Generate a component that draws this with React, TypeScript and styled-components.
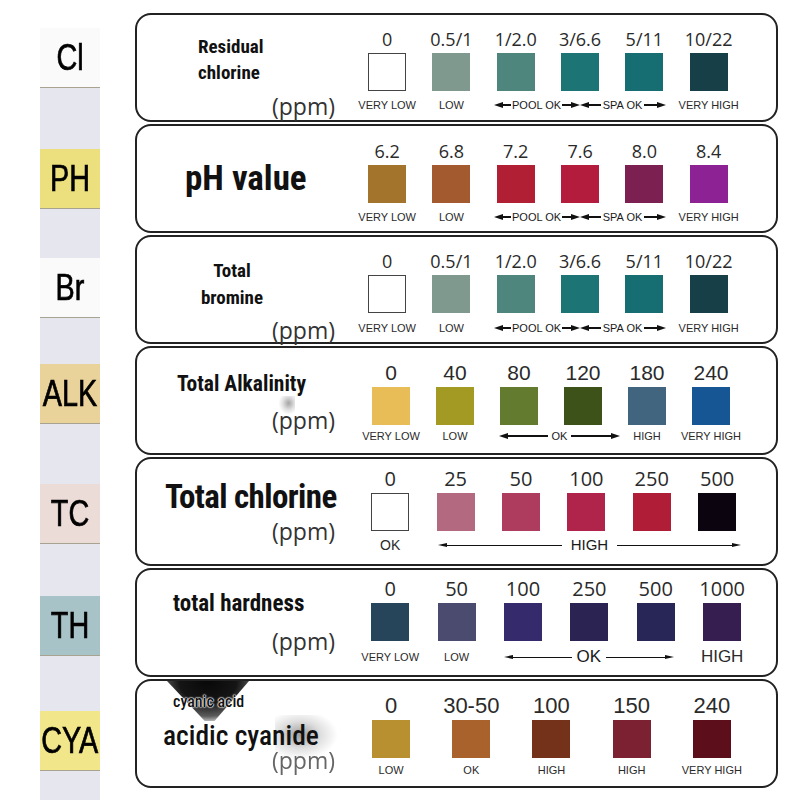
import React from "react";
import styled, { createGlobalStyle } from "styled-components";

const Global = createGlobalStyle`
  html, body { margin: 0; padding: 0; background: #fff; }
  body { width: 800px; height: 800px; overflow: hidden; font-family: "Liberation Sans", Arial, sans-serif; }
`;

const Page = styled.div`
  display: flex;
  align-items: flex-start;
  width: 800px;
  height: 800px;
`;

const Strip = styled.div`
  margin-left: 40px;
  margin-top: 28px;
  width: 60px;
  height: 772px;
  background: #e6e6ee;
  display: flex;
  flex-direction: column;
`;

const Pad = styled.div<{ $bg: string; $mt: number }>`
  margin-top: ${(p) => p.$mt}px;
  height: 59px;
  background: ${(p) => p.$bg};
  border-bottom: 1.5px solid #a8a290;
  display: flex;
  align-items: center;
  justify-content: center;
  overflow: hidden;
`;

const PadText = styled.span`
  display: inline-block;
  font-family: "Liberation Sans", Arial, sans-serif;
  font-size: 36px;
  line-height: 40px;
  color: #000;
  -webkit-text-stroke: 0.7px #000;
  transform: scaleX(0.8);
  white-space: nowrap;
`;

const Panels = styled.div`
  margin-left: 35px;
  margin-top: 13px;
  width: 643px;
  display: flex;
  flex-direction: column;
  gap: 2px;
`;

const Panel = styled.div`
  position: relative;
  height: 105px;
  border: 2px solid #222;
  border-radius: 16px;
  display: flex;
  background: #fff;
`;

const TitleArea = styled.div<{ $pt: number }>`
  width: 218px;
  flex: none;
  box-sizing: border-box;
  padding-top: ${(p) => p.$pt}px;
  padding-right: 20px;
  display: flex;
  flex-direction: column;
  position: relative;
`;

const Title = styled.div<{ $size: number; $lh: number; $ml: number; $w?: number; $mt?: number; $weight?: number; $ls?: number }>`
  margin-left: ${(p) => p.$ml}px;
  margin-top: ${(p) => p.$mt ?? 0}px;
  ${(p) => (p.$w ? `width: ${p.$w}px; text-align: center;` : "")}
  font-family: "Roboto Condensed", "Liberation Sans Narrow", Roboto, sans-serif;
  font-weight: ${(p) => p.$weight ?? 700};
  font-size: ${(p) => p.$size}px;
  line-height: ${(p) => p.$lh}px;
  letter-spacing: ${(p) => p.$ls ?? 0}px;
  color: #111;
  white-space: nowrap;
  position: relative;
  z-index: 1;
`;

const Ppm = styled.div<{ $mt: number; $faded?: boolean }>`
  align-self: flex-end;
  margin-top: ${(p) => p.$mt}px;
  font-family: "Open Sans", sans-serif;
  font-size: 23px;
  line-height: 26px;
  color: ${(p) => (p.$faded ? "#666" : "#333")};
  ${(p) => (p.$faded ? "filter: blur(0.6px);" : "")}
`;

const Grid = styled.div<{ $n: number; $w: number; $ml: number; $pt: number; $lmt: number }>`
  margin-left: ${(p) => p.$ml}px;
  padding-top: ${(p) => p.$pt}px;
  display: grid;
  grid-template-columns: repeat(${(p) => p.$n}, ${(p) => p.$w}px);
  grid-template-rows: 27px 38px ${(p) => 16 + p.$lmt}px;
  align-content: start;
`;

const Num = styled.div<{ $font: "open" | "arial"; $size: number }>`
  justify-self: center;
  align-self: start;
  font-family: ${(p) => (p.$font === "open" ? '"Open Sans", sans-serif' : '"Liberation Sans", Arial, sans-serif')};
  font-size: ${(p) => p.$size}px;
  line-height: 26px;
  color: #2a2a2a;
  white-space: nowrap;
`;

const Swatch = styled.div<{ $c: string }>`
  justify-self: center;
  width: 38px;
  height: 38px;
  box-sizing: border-box;
  background: ${(p) => (p.$c === "white" ? "#fff" : p.$c)};
  border: ${(p) => (p.$c === "white" ? "1.5px solid #444" : "none")};
`;

const LabelCell = styled.div<{ $span: number; $lmt: number; $ml?: number; $mr?: number }>`
  grid-column: span ${(p) => p.$span};
  padding-top: ${(p) => p.$lmt}px;
  margin-left: ${(p) => p.$ml ?? 0}px;
  margin-right: ${(p) => p.$mr ?? 0}px;
  display: flex;
  justify-content: center;
  align-items: center;
  height: 16px;
`;

const LabelText = styled.span<{ $size: number }>`
  font-family: "Liberation Sans", Arial, sans-serif;
  font-size: ${(p) => p.$size}px;
  color: #2a2a2a;
  white-space: nowrap;
  line-height: 16px;
`;

const Head = styled.span<{ $dir: "l" | "r"; $w: number; $h: number }>`
  flex: none;
  width: 0;
  height: 0;
  border-top: ${(p) => p.$h}px solid transparent;
  border-bottom: ${(p) => p.$h}px solid transparent;
  ${(p) => (p.$dir === "l" ? `border-right: ${p.$w}px solid #111;` : `border-left: ${p.$w}px solid #111;`)}
`;

const Line = styled.span<{ $t: number }>`
  flex: 1;
  height: ${(p) => p.$t}px;
  background: #111;
`;

const ArrowText = styled.span<{ $size: number; $gap: number }>`
  flex: none;
  padding: 0 ${(p) => p.$gap}px;
  font-family: "Liberation Sans", Arial, sans-serif;
  font-size: ${(p) => p.$size}px;
  line-height: 16px;
  color: #1a1a1a;
  white-space: nowrap;
`;

const ArrowBox = styled.span`
  flex: 1;
  display: flex;
  align-items: center;
`;

const Smudge = styled.span<{ $l: number; $t: number; $w: number; $h: number; $bg: string; $clip?: string }>`
  position: absolute;
  left: ${(p) => p.$l}px;
  top: ${(p) => p.$t}px;
  width: ${(p) => p.$w}px;
  height: ${(p) => p.$h}px;
  background: ${(p) => p.$bg};
  ${(p) => (p.$clip ? `clip-path: ${p.$clip};` : "")}
  pointer-events: none;
  z-index: 0;
`;

const Arrow: React.FC<{ text: string; size: number; gap: number; hw: number; hh: number; t: number }> = ({ text, size, gap, hw, hh, t }) => (
  <ArrowBox>
    <Head $dir="l" $w={hw} $h={hh} />
    <Line $t={t} />
    <ArrowText $size={size} $gap={gap}>{text}</ArrowText>
    <Line $t={t} />
    <Head $dir="r" $w={hw} $h={hh} />
  </ArrowBox>
);

type Lab =
  | { kind: "text"; text: string; size?: number; span?: number }
  | { kind: "arrow"; text: string; span: number; size: number; gap: number; ml: number; mr: number; hw: number; hh: number; t: number }
  | { kind: "poolspa"; span: number; ml: number; mr: number };

type PanelDef = {
  key: string;
  titlePt: number;
  title: React.ReactNode;
  ppm: React.ReactNode;
  smudges?: React.ReactNode;
  gridMl: number;
  colW: number;
  pt: number;
  lmt: number;
  numFont: "open" | "arial";
  numSize: number;
  values: string[];
  colors: string[];
  labels: Lab[];
};

const poolSpaLabels: Lab[] = [
  { kind: "text", text: "VERY LOW" },
  { kind: "text", text: "LOW" },
  { kind: "poolspa", span: 3, ml: 10, mr: 11 },
  { kind: "text", text: "VERY HIGH" },
];

const panels: PanelDef[] = [
  {
    key: "cl",
    titlePt: 19,
    title: (
      <Title $size={19} $lh={26} $ml={61}>
        Residual
        <br />
        chlorine
      </Title>
    ),
    ppm: <Ppm $mt={7}>(ppm)</Ppm>,
    gridMl: 0,
    colW: 64.3,
    pt: 11,
    lmt: 6,
    numFont: "open",
    numSize: 18,
    values: ["0", "0.5/1", "1/2.0", "3/6.6", "5/11", "10/22"],
    colors: ["white", "#80998f", "#4e857c", "#1d7474", "#176e72", "#163f47"],
    labels: poolSpaLabels,
  },
  {
    key: "ph",
    titlePt: 33,
    title: (
      <Title $size={35} $lh={40} $ml={48}>
        pH value
      </Title>
    ),
    ppm: null,
    gridMl: 0,
    colW: 64.3,
    pt: 12,
    lmt: 6,
    numFont: "open",
    numSize: 18,
    values: ["6.2", "6.8", "7.2", "7.6", "8.0", "8.4"],
    colors: ["#a3742c", "#a35a2e", "#b01f33", "#b41c3e", "#7c2052", "#8c2294"],
    labels: poolSpaLabels,
  },
  {
    key: "br",
    titlePt: 20,
    title: (
      <Title $size={19} $lh={27} $ml={55} $w={80}>
        Total
        <br />
        bromine
      </Title>
    ),
    ppm: <Ppm $mt={6}>(ppm)</Ppm>,
    gridMl: 0,
    colW: 64.3,
    pt: 11,
    lmt: 7,
    numFont: "open",
    numSize: 18,
    values: ["0", "0.5/1", "1/2.0", "3/6.6", "5/11", "10/22"],
    colors: ["white", "#80998f", "#4e857c", "#1d7474", "#176e72", "#163f47"],
    labels: poolSpaLabels,
  },
  {
    key: "alk",
    titlePt: 23,
    title: (
      <Title $size={21.5} $lh={26} $ml={40}>
        Total Alkalinity
      </Title>
    ),
    ppm: <Ppm $mt={10}>(ppm)</Ppm>,
    smudges: (
      <Smudge
        $l={142}
        $t={48}
        $w={16}
        $h={18}
        $bg="radial-gradient(ellipse at 60% 40%, rgba(90,90,90,0.55) 0%, rgba(140,140,140,0.25) 45%, rgba(255,255,255,0) 75%)"
      />
    ),
    gridMl: 4,
    colW: 64,
    pt: 12,
    lmt: 3,
    numFont: "arial",
    numSize: 21,
    values: ["0", "40", "80", "120", "180", "240"],
    colors: ["#e8bd57", "#a29a22", "#637b2f", "#3c5218", "#41647f", "#175694"],
    labels: [
      { kind: "text", text: "VERY LOW" },
      { kind: "text", text: "LOW" },
      { kind: "arrow", text: "OK", span: 2, size: 11, gap: 4, ml: 12, mr: -5, hw: 9, hh: 3, t: 1.5 },
      { kind: "text", text: "HIGH" },
      { kind: "text", text: "VERY HIGH" },
    ],
  },
  {
    key: "tc",
    titlePt: 19,
    title: (
      <Title $size={33} $lh={38} $ml={28} $ls={-0.6}>
        Total chlorine
      </Title>
    ),
    ppm: <Ppm $mt={2}>(ppm)</Ppm>,
    gridMl: 2.5,
    colW: 65.4,
    pt: 7,
    lmt: 6,
    numFont: "open",
    numSize: 20,
    values: ["0", "25", "50", "100", "250", "500"],
    colors: ["white", "#b36a80", "#ad3c5e", "#b0234b", "#b01d36", "#0c0510"],
    labels: [
      { kind: "text", text: "OK", size: 14 },
      { kind: "arrow", text: "HIGH", span: 5, size: 15, gap: 9, ml: 15, mr: 9, hw: 9, hh: 2.5, t: 1 },
    ],
  },
  {
    key: "th",
    titlePt: 20,
    title: (
      <Title $size={23} $lh={28} $ml={36}>
        total hardness
      </Title>
    ),
    ppm: <Ppm $mt={10}>(ppm)</Ppm>,
    gridMl: 2,
    colW: 66.4,
    pt: 6,
    lmt: 8,
    numFont: "open",
    numSize: 20,
    values: ["0", "50", "100", "250", "500", "1000"],
    colors: ["#26455a", "#4a4b6e", "#352a6c", "#2b2453", "#272656", "#361f50"],
    labels: [
      { kind: "text", text: "VERY LOW" },
      { kind: "text", text: "LOW" },
      { kind: "arrow", text: "OK", span: 3, size: 17, gap: 5, ml: 14, mr: 15, hw: 9, hh: 2.5, t: 1 },
      { kind: "text", text: "HIGH", size: 17 },
    ],
  },
  {
    key: "cya",
    titlePt: 12,
    title: (
      <>
        <Title
          $size={16}
          $lh={18}
          $ml={36}
          $weight={500}
          style={{ textShadow: "0 0 2px #fff, 0 0 2px #fff, 0 0 1px #fff, 0 0 1px #fff" }}
        >
          cyanic acid
        </Title>
        <Title $size={27.5} $lh={30} $ml={26} $mt={10} $weight={500}>
          acidic cyanide
        </Title>
      </>
    ),
    ppm: <Ppm $mt={-4} $faded>(ppm)</Ppm>,
    smudges: (
      <>
        <Smudge
          $l={30}
          $t={0}
          $w={82}
          $h={40}
          $bg="radial-gradient(ellipse 70% 110% at 50% 0%, #080808 0%, #151515 50%, rgba(50,50,50,0.8) 80%, rgba(255,255,255,0) 100%)"
          $clip="polygon(0 0, 100% 0, 58% 100%, 46% 100%)"
        />
        <Smudge
          $l={138}
          $t={34}
          $w={62}
          $h={44}
          $bg="radial-gradient(ellipse at 40% 45%, rgba(80,80,80,0.55) 0%, rgba(150,150,150,0.3) 40%, rgba(255,255,255,0) 72%)"
        />
      </>
    ),
    gridMl: -4,
    colW: 80.2,
    pt: 12,
    lmt: 4,
    numFont: "arial",
    numSize: 22,
    values: ["0", "30-50", "100", "150", "240"],
    colors: ["#b8902f", "#a9622b", "#74321a", "#7b2131", "#5c0e1b"],
    labels: [
      { kind: "text", text: "LOW" },
      { kind: "text", text: "OK" },
      { kind: "text", text: "HIGH" },
      { kind: "text", text: "HIGH" },
      { kind: "text", text: "VERY HIGH" },
    ],
  },
];

const pads = [
  { t: "Cl", bg: "#fafafa", mt: 0 },
  { t: "PH", bg: "#ecdf7e", mt: 61 },
  { t: "Br", bg: "#fafafa", mt: 49 },
  { t: "ALK", bg: "#ead39a", mt: 46 },
  { t: "TC", bg: "#ecdcd8", mt: 60 },
  { t: "TH", bg: "#a8c3c8", mt: 52 },
  { t: "CYA", bg: "#f2e68a", mt: 55 },
];

const renderLabel = (l: Lab, i: number, lmt: number) => {
  if (l.kind === "text") {
    return (
      <LabelCell key={i} $span={l.span ?? 1} $lmt={lmt}>
        <LabelText $size={l.size ?? 11}>{l.text}</LabelText>
      </LabelCell>
    );
  }
  if (l.kind === "arrow") {
    return (
      <LabelCell key={i} $span={l.span} $lmt={lmt} $ml={l.ml} $mr={l.mr}>
        <Arrow text={l.text} size={l.size} gap={l.gap} hw={l.hw} hh={l.hh} t={l.t} />
      </LabelCell>
    );
  }
  return (
    <LabelCell key={i} $span={l.span} $lmt={lmt} $ml={l.ml} $mr={l.mr}>
      <Arrow text="POOL OK" size={11} gap={1} hw={9} hh={3} t={1.5} />
      <Arrow text="SPA OK" size={11} gap={2} hw={9} hh={3} t={1.5} />
    </LabelCell>
  );
};

export default function App() {
  return (
    <>
      <Global />
      <Page>
        <Strip>
          {pads.map((p) => (
            <Pad key={p.t} $bg={p.bg} $mt={p.mt}>
              <PadText>{p.t}</PadText>
            </Pad>
          ))}
        </Strip>
        <Panels>
          {panels.map((p) => (
            <Panel key={p.key}>
              {p.smudges}
              <TitleArea $pt={p.titlePt}>
                {p.title}
                {p.ppm}
              </TitleArea>
              <Grid $n={p.values.length} $w={p.colW} $ml={p.gridMl} $pt={p.pt} $lmt={p.lmt}>
                {p.values.map((v) => (
                  <Num key={"n" + v} $font={p.numFont} $size={p.numSize}>
                    {v}
                  </Num>
                ))}
                {p.colors.map((c, i) => (
                  <Swatch key={"s" + i} $c={c} />
                ))}
                {p.labels.map((l, i) => renderLabel(l, i, p.lmt))}
              </Grid>
            </Panel>
          ))}
        </Panels>
      </Page>
    </>
  );
}
